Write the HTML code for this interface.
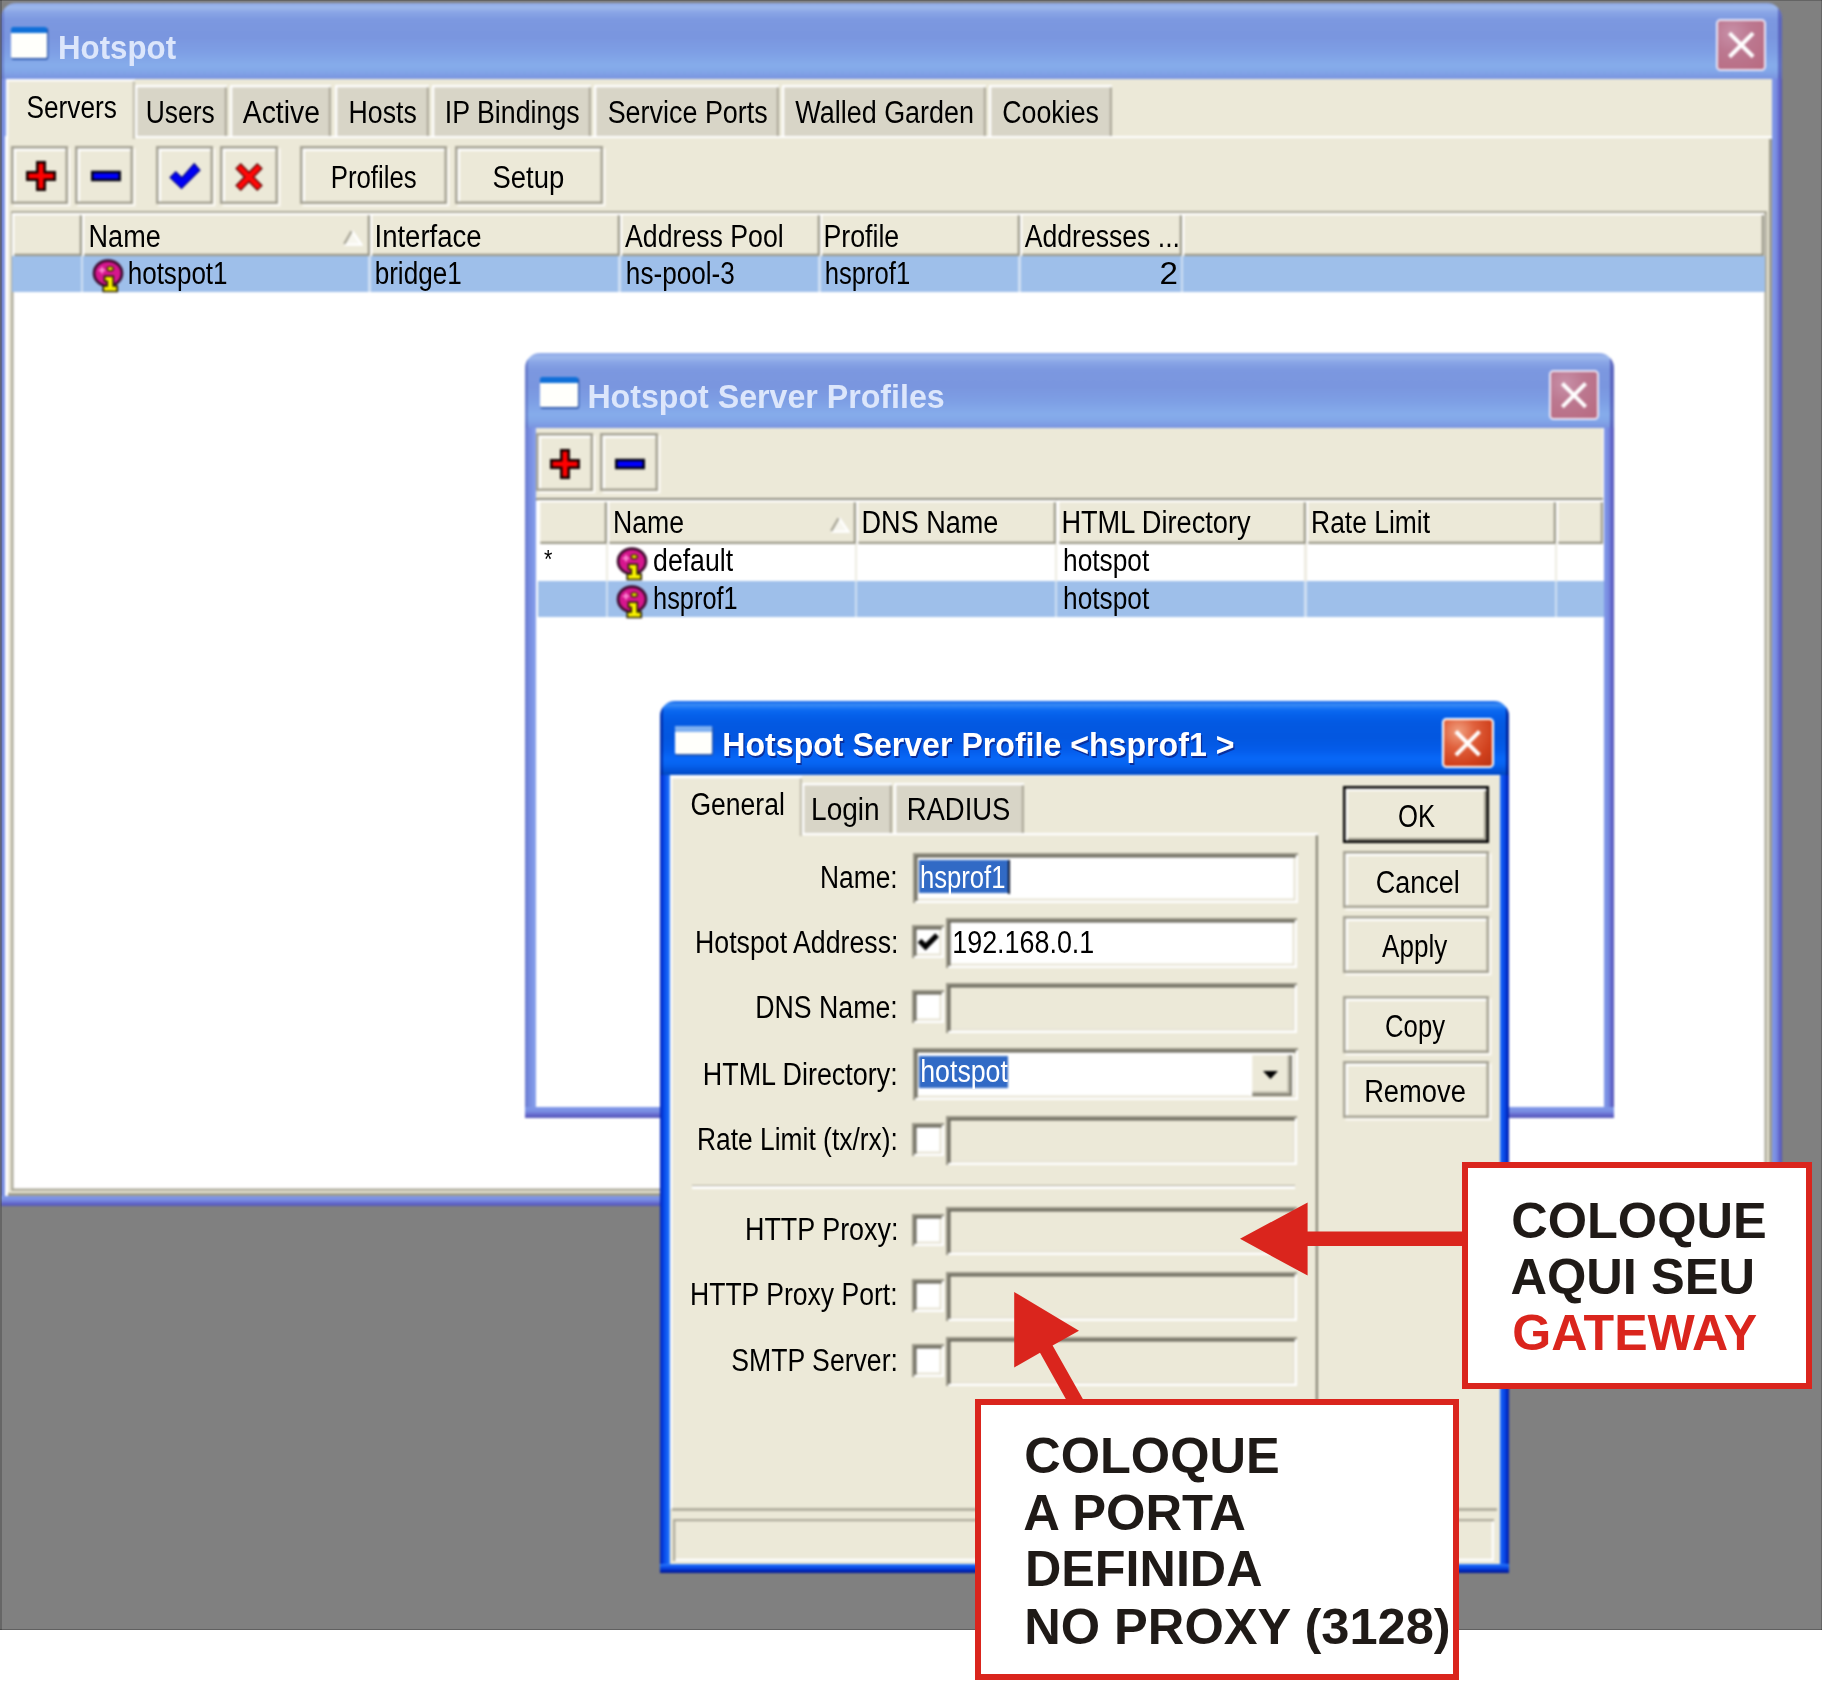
<!DOCTYPE html>
<html><head><meta charset="utf-8"><title>Hotspot</title>
<style>
html,body{margin:0;padding:0}
body{width:1822px;height:1681px;background:#fff;overflow:hidden;position:relative;font-family:"Liberation Sans",sans-serif}
#bg{position:absolute;left:0;top:0;width:1822px;height:1630px;background:#808080;overflow:hidden;box-shadow:inset 0 -1px 0 #606060}
#xp{position:absolute;left:0;top:0;width:1822px;height:1630px;filter:blur(0.8px)}
#xp div,#xp svg{position:absolute}
#tx{position:absolute;left:0;top:0;width:1822px;height:1630px;opacity:.999}
.t{position:absolute;left:0;top:0;white-space:nowrap}
</style></head><body>
<div id="bg"><div id="xp">
<div style="left:1.2px;top:75.7px;width:4.8px;height:1129.9px;background:linear-gradient(to right,#6a7acc 0%,#7488dc 30%,#7e96e6 70%,#8aa2ec 100%);"></div>
<div style="left:1771.7px;top:75.7px;width:9.9px;height:1129.9px;background:linear-gradient(to left,#5254b4 0%,#6468cc 28%,#7a8ee2 60%,#7f98e8 100%);"></div>
<div style="left:1.2px;top:1195.6px;width:1780.4px;height:10px;background:linear-gradient(to top,#5254b4 0%,#6468cc 28%,#7a8ee2 60%,#7f98e8 100%);"></div>
<div style="left:1.2px;top:3.4px;width:1780.4px;height:75.3px;border-radius:15px 15px 0 0;overflow:hidden;background:linear-gradient(to bottom,#8fa9e8 0%,#9db8ec 6%,#8aa6e6 12%,#7c98e0 22%,#7a96df 45%,#7e9fe5 65%,#86aceb 82%,#82a6e8 90%,#7a94e0 100%);"><div style="left:0;top:0;bottom:0;width:3px;background:rgba(80,90,180,.45)"></div><div style="right:0;top:0;bottom:0;width:3.5px;background:rgba(70,70,170,.6)"></div></div>
<div style="left:6px;top:78.7px;width:1765.7px;height:1116.9px;background:#ece9d8;"></div>
<div style="left:10.6px;top:26.5px;width:36.9px;height:31.5px;background:#fffffb;border-radius:1.5px;box-shadow:0.75px 1.25px 0 0.5px #2a55a8;"><div style="left:0;top:0;right:0;height:6.3px;background:#0f6fd8;border-radius:1.5px 1.5px 0 0"></div></div>
<div style="left:1715.6px;top:19.3px;width:50.4px;height:51.7px;box-sizing:border-box;border:2.25px solid #e8e4f4;border-radius:4.5px;background:radial-gradient(circle at 30% 25%,#c890a8 0%,#bc7890 40%,#b86a80 100%);"><svg style="position:absolute;left:0;top:0" width="48.4" height="49.7" viewBox="0 0 21 21"><path d="M5.6 5.6 L14.6 14.6 M14.6 5.6 L5.6 14.6" stroke="#fff" stroke-width="1.75" stroke-linecap="square" fill="none"/></svg></div>
<div style="left:134.8px;top:85.2px;width:92.5px;height:50.4px;background:#d8d5c7;box-shadow:inset 2.25px 2.25px 0 #fff,inset -2.25px 0 0 #aeab9b;"></div>
<div style="left:230.3px;top:85.2px;width:101.1px;height:50.4px;background:#d8d5c7;box-shadow:inset 2.25px 2.25px 0 #fff,inset -2.25px 0 0 #aeab9b;"></div>
<div style="left:334.7px;top:85.2px;width:94.8px;height:50.4px;background:#d8d5c7;box-shadow:inset 2.25px 2.25px 0 #fff,inset -2.25px 0 0 #aeab9b;"></div>
<div style="left:432.3px;top:85.2px;width:159.2px;height:50.4px;background:#d8d5c7;box-shadow:inset 2.25px 2.25px 0 #fff,inset -2.25px 0 0 #aeab9b;"></div>
<div style="left:594.2px;top:85.2px;width:185.1px;height:50.4px;background:#d8d5c7;box-shadow:inset 2.25px 2.25px 0 #fff,inset -2.25px 0 0 #aeab9b;"></div>
<div style="left:781.5px;top:85.2px;width:204.8px;height:50.4px;background:#d8d5c7;box-shadow:inset 2.25px 2.25px 0 #fff,inset -2.25px 0 0 #aeab9b;"></div>
<div style="left:988.5px;top:85.2px;width:123.5px;height:50.4px;background:#d8d5c7;box-shadow:inset 2.25px 2.25px 0 #fff,inset -2.25px 0 0 #aeab9b;"></div>
<div style="left:6px;top:135.6px;width:1765.7px;height:2.8px;background:#fff;"></div>
<div style="left:5.4px;top:136.3px;width:2.8px;height:1059.3px;background:#fff;"></div>
<div style="left:1769.2px;top:139px;width:2.5px;height:1056.6px;background:#a09e8e;"></div>
<div style="left:8.2px;top:1193.4px;width:1763.5px;height:2.4px;background:#a09e8e;"></div>
<div style="left:6px;top:79.2px;width:128.5px;height:59.4px;background:#ece9d8;box-shadow:inset 2.25px 2.25px 0 #fff,inset -2.25px 0 0 #c2bfaf;"></div>
<div style="left:10.6px;top:146.4px;width:57.5px;height:57.2px;background:#ece9d8;box-shadow:inset 0 0 0 2.5px #a6a394,inset 5px 5px 0 #fff,2.5px 2.5px 0 #fbfaf4;"></div>
<svg style="position:absolute;left:40.6px;top:176.3px;overflow:visible" width="2.5" height="2.5" viewBox="0 0 1 1"><path d="M-1.5 -5.5 h3 v4 h4 v3 h-4 v4 h-3 v-4 h-4 v-3 h4 z" fill="#ff0000" stroke="#100000" stroke-width="1"/></svg>
<div style="left:75.3px;top:146.4px;width:57.5px;height:57.2px;background:#ece9d8;box-shadow:inset 0 0 0 2.5px #a6a394,inset 5px 5px 0 #fff,2.5px 2.5px 0 #fbfaf4;"></div>
<svg style="position:absolute;left:105.6px;top:176.3px;overflow:visible" width="2.5" height="2.5" viewBox="0 0 1 1"><rect x="-5.5" y="-1.6" width="11" height="3.2" fill="#0000ff" stroke="#000010" stroke-width="1"/></svg>
<div style="left:155.8px;top:146.4px;width:57.5px;height:57.2px;background:#ece9d8;box-shadow:inset 0 0 0 2.5px #a6a394,inset 5px 5px 0 #fff,2.5px 2.5px 0 #fbfaf4;"></div>
<svg style="position:absolute;left:185.4px;top:176px;overflow:visible" width="2.5" height="2.5" viewBox="0 0 1 1"><path d="M3.69 -4.99 L5.97 -2.35 L-1.4 5.02 L-5.97 0.63 L-3.69 -1.72 L-1.23 0.63 Z" fill="#0000f4" stroke="#00007c" stroke-width="0.45"/></svg>
<div style="left:220.3px;top:146.4px;width:57.5px;height:57.2px;background:#ece9d8;box-shadow:inset 0 0 0 2.5px #a6a394,inset 5px 5px 0 #fff,2.5px 2.5px 0 #fbfaf4;"></div>
<svg style="position:absolute;left:249.3px;top:177.1px;overflow:visible" width="2.5" height="2.5" viewBox="0 0 1 1"><path d="M-4.4 -4.5 L4.4 4.5 M4.4 -4.5 L-4.4 4.5" stroke="#5a0000" stroke-width="3.1" fill="none"/><path d="M-4.1 -4.2 L4.1 4.2 M4.1 -4.2 L-4.1 4.2" stroke="#ff0808" stroke-width="2.1" fill="none"/></svg>
<div style="left:299.8px;top:146.4px;width:147.4px;height:57.2px;background:#ece9d8;box-shadow:inset 0 0 0 2.5px #a6a394,inset 5px 5px 0 #fff,2.5px 2.5px 0 #fbfaf4;"></div>
<div style="left:455.1px;top:146.4px;width:147.5px;height:57.2px;background:#ece9d8;box-shadow:inset 0 0 0 2.5px #a6a394,inset 5px 5px 0 #fff,2.5px 2.5px 0 #fbfaf4;"></div>
<div style="left:10.5px;top:210.8px;width:1756.5px;height:979.8px;background:#fff;box-shadow:inset 0 0 0 2.5px #aeab9b;"></div>
<div style="left:12px;top:213.2px;width:70.3px;height:42.6px;background:#ece9d8;box-shadow:inset 2.25px 2.25px 0 #fff,inset -2.25px -2.25px 0 #9c9a8a;"></div>
<div style="left:82.3px;top:213.2px;width:287.6px;height:42.6px;background:#ece9d8;box-shadow:inset 2.25px 2.25px 0 #fff,inset -2.25px -2.25px 0 #9c9a8a;"></div>
<div style="left:369.9px;top:213.2px;width:250px;height:42.6px;background:#ece9d8;box-shadow:inset 2.25px 2.25px 0 #fff,inset -2.25px -2.25px 0 #9c9a8a;"></div>
<div style="left:619.9px;top:213.2px;width:200px;height:42.6px;background:#ece9d8;box-shadow:inset 2.25px 2.25px 0 #fff,inset -2.25px -2.25px 0 #9c9a8a;"></div>
<div style="left:819.9px;top:213.2px;width:200px;height:42.6px;background:#ece9d8;box-shadow:inset 2.25px 2.25px 0 #fff,inset -2.25px -2.25px 0 #9c9a8a;"></div>
<div style="left:1019.9px;top:213.2px;width:162.5px;height:42.6px;background:#ece9d8;box-shadow:inset 2.25px 2.25px 0 #fff,inset -2.25px -2.25px 0 #9c9a8a;"></div>
<div style="left:1182.4px;top:213.2px;width:582.1px;height:42.6px;background:#ece9d8;box-shadow:inset 2.25px 2.25px 0 #fff,inset -2.25px -2.25px 0 #9c9a8a;"></div>
<svg style="position:absolute;left:342.5px;top:228.6px" width="20" height="17.5" viewBox="0 0 8 7"><path d="M3.4 0.6 L7.6 6.5 L0.4 6.5 Z" fill="#f7f6ee"/><path d="M3.6 0.8 L7.4 6.2 L0.6 6.2" stroke="#fff" stroke-width="0.9" fill="none"/><path d="M0.5 6 L3.4 0.9" stroke="#a5a293" stroke-width="0.9"/></svg>
<div style="left:12px;top:256px;width:1752.5px;height:35.8px;background:#9ebfea;"></div>
<div style="left:80.7px;top:256px;width:2.6px;height:35.8px;background:#cfdff3;"></div>
<div style="left:368.3px;top:256px;width:2.6px;height:35.8px;background:#cfdff3;"></div>
<div style="left:618.3px;top:256px;width:2.6px;height:35.8px;background:#cfdff3;"></div>
<div style="left:818.3px;top:256px;width:2.6px;height:35.8px;background:#cfdff3;"></div>
<div style="left:1018.3px;top:256px;width:2.6px;height:35.8px;background:#cfdff3;"></div>
<div style="left:1180.8px;top:256px;width:2.6px;height:35.8px;background:#cfdff3;"></div>
<svg style="position:absolute;left:88.3px;top:257.15px" width="40" height="40" viewBox="0 0 16 16"><ellipse cx="8" cy="6.5" rx="5.6" ry="5.05" fill="#d6168e" stroke="#3c0a2c" stroke-width="1.05"/><path d="M4.3 5.3 h2.6 M5.6 4 v2.6" stroke="#ff8ad6" stroke-width="0.75"/><ellipse cx="8.9" cy="4.7" rx="1.25" ry="0.85" fill="#f4ee00" stroke="#3a2a00" stroke-width="0.55"/><path d="M6.6 7.7 h3.5 v3.9 h1.6 v2.2 h-5.6 v-2.2 h1.6 v-1.9 h-1.1 z" fill="#f8f200" stroke="#221a00" stroke-width="0.65"/></svg>
<div style="left:525.2px;top:425.3px;width:11.2px;height:692.7px;background:linear-gradient(to right,#6a7acc 0%,#7488dc 30%,#7e96e6 70%,#8aa2ec 100%);"></div>
<div style="left:1603.5px;top:425.3px;width:10.5px;height:692.7px;background:linear-gradient(to left,#5254b4 0%,#6468cc 28%,#7a8ee2 60%,#7f98e8 100%);"></div>
<div style="left:525.2px;top:1107px;width:1088.8px;height:11px;background:linear-gradient(to top,#5254b4 0%,#6468cc 28%,#7a8ee2 60%,#7f98e8 100%);"></div>
<div style="left:525.2px;top:353.4px;width:1088.8px;height:74.9px;border-radius:15px 15px 0 0;overflow:hidden;background:linear-gradient(to bottom,#8fa9e8 0%,#9db8ec 6%,#8aa6e6 12%,#7c98e0 22%,#7a96df 45%,#7e9fe5 65%,#86aceb 82%,#82a6e8 90%,#7a94e0 100%);"><div style="left:0;top:0;bottom:0;width:3px;background:rgba(80,90,180,.45)"></div><div style="right:0;top:0;bottom:0;width:3.5px;background:rgba(70,70,170,.6)"></div></div>
<div style="left:536.4px;top:428.3px;width:1067.1px;height:678.7px;background:#ece9d8;"></div>
<div style="left:539.6px;top:376.8px;width:38.2px;height:30.4px;background:#fffffb;border-radius:1.5px;box-shadow:0.75px 1.25px 0 0.5px #2a55a8;"><div style="left:0;top:0;right:0;height:6.08px;background:#0f6fd8;border-radius:1.5px 1.5px 0 0"></div></div>
<div style="left:1548.8px;top:369.5px;width:49.8px;height:50.1px;box-sizing:border-box;border:2.25px solid #e8e4f4;border-radius:4.5px;background:radial-gradient(circle at 30% 25%,#c890a8 0%,#bc7890 40%,#b86a80 100%);"><svg style="position:absolute;left:0;top:0" width="47.8" height="48.1" viewBox="0 0 21 21"><path d="M5.6 5.6 L14.6 14.6 M14.6 5.6 L5.6 14.6" stroke="#fff" stroke-width="1.75" stroke-linecap="square" fill="none"/></svg></div>
<div style="left:535.8px;top:433.2px;width:57.4px;height:57.5px;background:#ece9d8;box-shadow:inset 0 0 0 2.5px #a6a394,inset 5px 5px 0 #fff,2.5px 2.5px 0 #fbfaf4;"></div>
<svg style="position:absolute;left:565.1px;top:463.7px;overflow:visible" width="2.5" height="2.5" viewBox="0 0 1 1"><path d="M-1.5 -5.5 h3 v4 h4 v3 h-4 v4 h-3 v-4 h-4 v-3 h4 z" fill="#ff0000" stroke="#100000" stroke-width="1"/></svg>
<div style="left:600.3px;top:433.2px;width:57.3px;height:57.5px;background:#ece9d8;box-shadow:inset 0 0 0 2.5px #a6a394,inset 5px 5px 0 #fff,2.5px 2.5px 0 #fbfaf4;"></div>
<svg style="position:absolute;left:630.3px;top:463.6px;overflow:visible" width="2.5" height="2.5" viewBox="0 0 1 1"><rect x="-5.5" y="-1.6" width="11" height="3.2" fill="#0000ff" stroke="#000010" stroke-width="1"/></svg>
<div style="left:536.4px;top:498px;width:1067.1px;height:609px;background:#fff;box-shadow:inset 0 2.25px 0 #8f8d80;"></div>
<div style="left:537.5px;top:500px;width:69.6px;height:43.6px;background:#ece9d8;box-shadow:inset 2.25px 2.25px 0 #fff,inset -2.25px -2.25px 0 #9c9a8a;"></div>
<div style="left:607.1px;top:500px;width:249.2px;height:43.6px;background:#ece9d8;box-shadow:inset 2.25px 2.25px 0 #fff,inset -2.25px -2.25px 0 #9c9a8a;"></div>
<div style="left:856.3px;top:500px;width:200.2px;height:43.6px;background:#ece9d8;box-shadow:inset 2.25px 2.25px 0 #fff,inset -2.25px -2.25px 0 #9c9a8a;"></div>
<div style="left:1056.5px;top:500px;width:249.4px;height:43.6px;background:#ece9d8;box-shadow:inset 2.25px 2.25px 0 #fff,inset -2.25px -2.25px 0 #9c9a8a;"></div>
<div style="left:1305.9px;top:500px;width:250.2px;height:43.6px;background:#ece9d8;box-shadow:inset 2.25px 2.25px 0 #fff,inset -2.25px -2.25px 0 #9c9a8a;"></div>
<div style="left:1556.1px;top:500px;width:47.4px;height:43.6px;background:#ece9d8;box-shadow:inset 2.25px 2.25px 0 #fff,inset -2.25px -2.25px 0 #9c9a8a;"></div>
<svg style="position:absolute;left:830px;top:516px" width="20" height="17.5" viewBox="0 0 8 7"><path d="M3.4 0.6 L7.6 6.5 L0.4 6.5 Z" fill="#f7f6ee"/><path d="M3.6 0.8 L7.4 6.2 L0.6 6.2" stroke="#fff" stroke-width="0.9" fill="none"/><path d="M0.5 6 L3.4 0.9" stroke="#a5a293" stroke-width="0.9"/></svg>
<div style="left:537.5px;top:581.2px;width:1066px;height:35.6px;background:#9ebfea;"></div>
<div style="left:605.5px;top:544px;width:2.6px;height:37.2px;background:#eeece2;"></div>
<div style="left:605.5px;top:581.2px;width:2.6px;height:35.6px;background:#cfdff3;"></div>
<div style="left:854.7px;top:544px;width:2.6px;height:37.2px;background:#eeece2;"></div>
<div style="left:854.7px;top:581.2px;width:2.6px;height:35.6px;background:#cfdff3;"></div>
<div style="left:1054.9px;top:544px;width:2.6px;height:37.2px;background:#eeece2;"></div>
<div style="left:1054.9px;top:581.2px;width:2.6px;height:35.6px;background:#cfdff3;"></div>
<div style="left:1304.3px;top:544px;width:2.6px;height:37.2px;background:#eeece2;"></div>
<div style="left:1304.3px;top:581.2px;width:2.6px;height:35.6px;background:#cfdff3;"></div>
<div style="left:1554.5px;top:544px;width:2.6px;height:37.2px;background:#eeece2;"></div>
<div style="left:1554.5px;top:581.2px;width:2.6px;height:35.6px;background:#cfdff3;"></div>
<svg style="position:absolute;left:612.2px;top:544.95px" width="40" height="40" viewBox="0 0 16 16"><ellipse cx="8" cy="6.5" rx="5.6" ry="5.05" fill="#d6168e" stroke="#3c0a2c" stroke-width="1.05"/><path d="M4.3 5.3 h2.6 M5.6 4 v2.6" stroke="#ff8ad6" stroke-width="0.75"/><ellipse cx="8.9" cy="4.7" rx="1.25" ry="0.85" fill="#f4ee00" stroke="#3a2a00" stroke-width="0.55"/><path d="M6.6 7.7 h3.5 v3.9 h1.6 v2.2 h-5.6 v-2.2 h1.6 v-1.9 h-1.1 z" fill="#f8f200" stroke="#221a00" stroke-width="0.65"/></svg>
<svg style="position:absolute;left:612.2px;top:582.55px" width="40" height="40" viewBox="0 0 16 16"><ellipse cx="8" cy="6.5" rx="5.6" ry="5.05" fill="#d6168e" stroke="#3c0a2c" stroke-width="1.05"/><path d="M4.3 5.3 h2.6 M5.6 4 v2.6" stroke="#ff8ad6" stroke-width="0.75"/><ellipse cx="8.9" cy="4.7" rx="1.25" ry="0.85" fill="#f4ee00" stroke="#3a2a00" stroke-width="0.55"/><path d="M6.6 7.7 h3.5 v3.9 h1.6 v2.2 h-5.6 v-2.2 h1.6 v-1.9 h-1.1 z" fill="#f8f200" stroke="#221a00" stroke-width="0.65"/></svg>
<div style="left:660.2px;top:772.5px;width:9.6px;height:800.5px;background:linear-gradient(to right,#0020b4 0%,#0538d8 22%,#0a52ee 50%,#1a6af8 82%,#3a86fa 100%);"></div>
<div style="left:1500px;top:772.5px;width:9.4px;height:800.5px;background:linear-gradient(to left,#0016a0 0%,#0230cc 25%,#0a4ae8 55%,#155ff4 85%,#2a74f8 100%);"></div>
<div style="left:660.2px;top:1563.5px;width:849.2px;height:9.5px;background:linear-gradient(to top,#00148c 0%,#0026b8 25%,#0a48e4 55%,#1a66f6 85%,#3a86fa 100%);"></div>
<div style="left:660.2px;top:701.4px;width:849.2px;height:74.1px;border-radius:15px 15px 0 0;overflow:hidden;background:linear-gradient(to bottom,#0a5fe8 0%,#3b8cf6 5%,#1f78f4 9%,#0a68f0 13%,#0560ea 20%,#0359e2 30%,#0357e0 50%,#045cea 66%,#0868f8 78%,#0663f0 86%,#0355dc 93%,#0048c0 100%);"><div style="left:0;top:0;bottom:0;width:3px;background:rgba(0,20,140,.55)"></div><div style="right:0;top:0;bottom:0;width:3.5px;background:rgba(0,16,130,.7)"></div></div>
<div style="left:669.8px;top:775.5px;width:830.2px;height:788px;background:#ece9d8;"></div>
<div style="left:674.8px;top:726.4px;width:37.6px;height:27.2px;background:#fffffb;border-radius:1.5px;box-shadow:0.75px 1.25px 0 0.5px #2a55a8;"><div style="left:0;top:0;right:0;height:5.45px;background:#7fb0f0;border-radius:1.5px 1.5px 0 0"></div></div>
<div style="left:1442.4px;top:717.9px;width:51.2px;height:50.5px;box-sizing:border-box;border:2.25px solid #fff;border-radius:4.5px;background:radial-gradient(circle at 30% 25%,#f0a080 0%,#e0603c 35%,#d0401c 70%,#b83414 100%);"><svg style="position:absolute;left:0;top:0" width="49.2" height="48.5" viewBox="0 0 21 21"><path d="M5.6 5.6 L14.6 14.6 M14.6 5.6 L5.6 14.6" stroke="#fff" stroke-width="1.75" stroke-linecap="square" fill="none"/></svg></div>
<div style="left:669.8px;top:833px;width:648.2px;height:676px;box-shadow:inset 2.25px 2.25px 0 #fff,inset -2.25px 0 0 #8a8878;"></div>
<div style="left:801.8px;top:783.4px;width:90.1px;height:49.8px;background:#d8d5c7;box-shadow:inset 2.25px 2.25px 0 #fff,inset -2.25px 0 0 #aeab9b;"></div>
<div style="left:893.6px;top:783.4px;width:130px;height:49.8px;background:#d8d5c7;box-shadow:inset 2.25px 2.25px 0 #fff,inset -2.25px 0 0 #aeab9b;"></div>
<div style="left:669.8px;top:776.4px;width:131.8px;height:59.6px;background:#ece9d8;box-shadow:inset 2.25px 2.25px 0 #fff,inset -2.25px 0 0 #c2bfaf;"></div>
<div style="left:913px;top:853.3px;width:384.5px;height:49.5px;background:#fff;box-shadow:inset 2.25px 2.25px 0 #9a9788,inset -2.25px -2.25px 0 #fff,inset 4.5px 4.5px 0 #6a685c,inset -4.5px -4.5px 0 #e8e5d6;"></div>
<div style="left:919.4px;top:860.4px;width:89.6px;height:33px;background:#316ac5;"></div>
<div style="left:1008px;top:860.4px;width:2px;height:33.4px;background:#101830;"></div>
<div style="left:911.8px;top:925.3px;width:32.6px;height:32.8px;background:#fff;box-shadow:inset 2.25px 2.25px 0 #9a9788,inset -2.25px -2.25px 0 #fff,inset 4.5px 4.5px 0 #6a685c,inset -4.5px -4.5px 0 #e8e5d6;"><svg style="position:absolute;left:0;top:0" width="32.6" height="32.8" viewBox="0 0 13 13"><path d="M3 6.2 L5.4 8.6 L10 4" stroke="#000" stroke-width="2.1" fill="none"/></svg></div>
<div style="left:945.6px;top:918.3px;width:351.9px;height:49.5px;background:#fff;box-shadow:inset 2.25px 2.25px 0 #9a9788,inset -2.25px -2.25px 0 #fff,inset 4.5px 4.5px 0 #6a685c,inset -4.5px -4.5px 0 #e8e5d6;"></div>
<div style="left:911.8px;top:990.3px;width:32.6px;height:32.8px;background:#fff;box-shadow:inset 2.25px 2.25px 0 #9a9788,inset -2.25px -2.25px 0 #fff,inset 4.5px 4.5px 0 #6a685c,inset -4.5px -4.5px 0 #e8e5d6;"></div>
<div style="left:945.6px;top:983.3px;width:351.9px;height:49.5px;background:#ece9d8;box-shadow:inset 2.25px 2.25px 0 #9a9788,inset -2.25px -2.25px 0 #fff,inset 4.5px 4.5px 0 #6a685c,inset -4.5px -4.5px 0 #e8e5d6;"></div>
<div style="left:913px;top:1048.3px;width:384.5px;height:52.1px;background:#fff;box-shadow:inset 2.25px 2.25px 0 #9a9788,inset -2.25px -2.25px 0 #fff,inset 4.5px 4.5px 0 #6a685c,inset -4.5px -4.5px 0 #e8e5d6;"></div>
<div style="left:1250px;top:1052.8px;width:42.4px;height:42.8px;background:#ece9d8;box-shadow:inset 2.25px 2.25px 0 #fff,inset -2.25px -2.25px 0 #7d7b6e,inset -4.5px -4.5px 0 #b8b5a6;"></div>
<svg style="position:absolute;left:1262.5px;top:1070.5px" width="15" height="8" viewBox="0 0 6 3.2"><path d="M0 0 H6 L3 3.2 Z" fill="#000"/></svg>
<div style="left:919.4px;top:1056px;width:88.2px;height:32.4px;background:#316ac5;"></div>
<div style="left:911.8px;top:1122.8px;width:32.6px;height:32.8px;background:#fff;box-shadow:inset 2.25px 2.25px 0 #9a9788,inset -2.25px -2.25px 0 #fff,inset 4.5px 4.5px 0 #6a685c,inset -4.5px -4.5px 0 #e8e5d6;"></div>
<div style="left:945.6px;top:1115.8px;width:351.9px;height:49.2px;background:#ece9d8;box-shadow:inset 2.25px 2.25px 0 #9a9788,inset -2.25px -2.25px 0 #fff,inset 4.5px 4.5px 0 #6a685c,inset -4.5px -4.5px 0 #e8e5d6;"></div>
<div style="left:692px;top:1184.6px;width:603px;height:1.8px;background:#aca899;"></div>
<div style="left:692px;top:1186.4px;width:603px;height:2.2px;background:#fff;"></div>
<div style="left:911.8px;top:1213.6px;width:32.6px;height:32.8px;background:#fff;box-shadow:inset 2.25px 2.25px 0 #9a9788,inset -2.25px -2.25px 0 #fff,inset 4.5px 4.5px 0 #6a685c,inset -4.5px -4.5px 0 #e8e5d6;"></div>
<div style="left:945.6px;top:1206.6px;width:351.9px;height:48.8px;background:#ece9d8;box-shadow:inset 2.25px 2.25px 0 #9a9788,inset -2.25px -2.25px 0 #fff,inset 4.5px 4.5px 0 #6a685c,inset -4.5px -4.5px 0 #e8e5d6;"></div>
<div style="left:911.8px;top:1278.8px;width:32.6px;height:32.8px;background:#fff;box-shadow:inset 2.25px 2.25px 0 #9a9788,inset -2.25px -2.25px 0 #fff,inset 4.5px 4.5px 0 #6a685c,inset -4.5px -4.5px 0 #e8e5d6;"></div>
<div style="left:945.6px;top:1271.8px;width:351.9px;height:48.8px;background:#ece9d8;box-shadow:inset 2.25px 2.25px 0 #9a9788,inset -2.25px -2.25px 0 #fff,inset 4.5px 4.5px 0 #6a685c,inset -4.5px -4.5px 0 #e8e5d6;"></div>
<div style="left:911.8px;top:1344px;width:32.6px;height:32.8px;background:#fff;box-shadow:inset 2.25px 2.25px 0 #9a9788,inset -2.25px -2.25px 0 #fff,inset 4.5px 4.5px 0 #6a685c,inset -4.5px -4.5px 0 #e8e5d6;"></div>
<div style="left:945.6px;top:1337px;width:351.9px;height:48.8px;background:#ece9d8;box-shadow:inset 2.25px 2.25px 0 #9a9788,inset -2.25px -2.25px 0 #fff,inset 4.5px 4.5px 0 #6a685c,inset -4.5px -4.5px 0 #e8e5d6;"></div>
<div style="left:1342.5px;top:786.2px;width:146.8px;height:56.7px;background:#ece9d8;box-shadow:inset 0 0 0 2.5px #000,inset 5px 5px 0 #fff,inset -5px -5px 0 #a29f90;"></div>
<div style="left:1342.5px;top:851.4px;width:146.8px;height:56.7px;background:#ece9d8;box-shadow:inset 0 0 0 2.5px #a6a394,inset 5px 5px 0 #fff,2.5px 2.5px 0 #fbfaf4;"></div>
<div style="left:1342.5px;top:916.2px;width:146.8px;height:56.7px;background:#ece9d8;box-shadow:inset 0 0 0 2.5px #a6a394,inset 5px 5px 0 #fff,2.5px 2.5px 0 #fbfaf4;"></div>
<div style="left:1342.5px;top:996.2px;width:146.8px;height:56.7px;background:#ece9d8;box-shadow:inset 0 0 0 2.5px #a6a394,inset 5px 5px 0 #fff,2.5px 2.5px 0 #fbfaf4;"></div>
<div style="left:1342.5px;top:1061.2px;width:146.8px;height:56.7px;background:#ece9d8;box-shadow:inset 0 0 0 2.5px #a6a394,inset 5px 5px 0 #fff,2.5px 2.5px 0 #fbfaf4;"></div>
<div style="left:672.4px;top:1508.4px;width:824.6px;height:2.2px;background:#b3b0a0;"></div>
<div style="left:673px;top:1518.6px;width:487px;height:42.4px;box-shadow:inset 2.25px 2.25px 0 #aeab9b,inset -2.25px -2.25px 0 #fff;"></div>
<div style="left:1166px;top:1518.6px;width:327.5px;height:42.4px;box-shadow:inset 2.25px 2.25px 0 #aeab9b,inset -2.25px -2.25px 0 #fff;"></div>
</div>
<div id="tx">
<div class="t" style="font-size:33px;line-height:33px;font-weight:bold;color:#dce6fb;transform:translate(58.06px,30.6px) scaleX(0.9466);transform-origin:0 0;">Hotspot</div>
<div class="t" style="font-size:31px;line-height:31px;color:#000;transform:translate(145.66px,96.6px) scaleX(0.8529);transform-origin:0 0;">Users</div>
<div class="t" style="font-size:31px;line-height:31px;color:#000;transform:translate(242.84px,96.6px) scaleX(0.9125);transform-origin:0 0;">Active</div>
<div class="t" style="font-size:31px;line-height:31px;color:#000;transform:translate(348.59px,96.6px) scaleX(0.8608);transform-origin:0 0;">Hosts</div>
<div class="t" style="font-size:31px;line-height:31px;color:#000;transform:translate(444.79px,96.6px) scaleX(0.8632);transform-origin:0 0;">IP Bindings</div>
<div class="t" style="font-size:31px;line-height:31px;color:#000;transform:translate(607.65px,96.6px) scaleX(0.8685);transform-origin:0 0;">Service Ports</div>
<div class="t" style="font-size:31px;line-height:31px;color:#000;transform:translate(795.30px,96.6px) scaleX(0.8690);transform-origin:0 0;">Walled Garden</div>
<div class="t" style="font-size:31px;line-height:31px;color:#000;transform:translate(1002.24px,96.6px) scaleX(0.8634);transform-origin:0 0;">Cookies</div>
<div class="t" style="font-size:31px;line-height:31px;color:#000;transform:translate(26.44px,92.3px) scaleX(0.8463);transform-origin:0 0;">Servers</div>
<div class="t" style="font-size:31px;line-height:31px;color:#000;transform:translate(330.68px,162.2px) scaleX(0.8323);transform-origin:0 0;">Profiles</div>
<div class="t" style="font-size:31px;line-height:31px;color:#000;transform:translate(492.58px,162.2px) scaleX(0.8845);transform-origin:0 0;">Setup</div>
<div class="t" style="font-size:31px;line-height:31px;color:#000;transform:translate(88.59px,220.6px) scaleX(0.8717);transform-origin:0 0;">Name</div>
<div class="t" style="font-size:31px;line-height:31px;color:#000;transform:translate(374.50px,220.6px) scaleX(0.8875);transform-origin:0 0;">Interface</div>
<div class="t" style="font-size:31px;line-height:31px;color:#000;transform:translate(625.09px,220.6px) scaleX(0.8599);transform-origin:0 0;">Address Pool</div>
<div class="t" style="font-size:31px;line-height:31px;color:#000;transform:translate(823.40px,220.6px) scaleX(0.8631);transform-origin:0 0;">Profile</div>
<div class="t" style="font-size:31px;line-height:31px;color:#000;transform:translate(1024.70px,220.6px) scaleX(0.8581);transform-origin:0 0;">Addresses ...</div>
<div class="t" style="font-size:31px;line-height:31px;color:#000;transform:translate(127.67px,257.8px) scaleX(0.8401);transform-origin:0 0;">hotspot1</div>
<div class="t" style="font-size:31px;line-height:31px;color:#000;transform:translate(374.66px,257.8px) scaleX(0.8420);transform-origin:0 0;">bridge1</div>
<div class="t" style="font-size:31px;line-height:31px;color:#000;transform:translate(625.86px,257.8px) scaleX(0.8431);transform-origin:0 0;">hs-pool-3</div>
<div class="t" style="font-size:31px;line-height:31px;color:#000;transform:translate(824.70px,257.8px) scaleX(0.8270);transform-origin:0 0;">hsprof1</div>
<div class="t" style="font-size:31px;line-height:31px;color:#000;transform:translate(1159.50px,257.8px) scaleX(1.0686);transform-origin:0 0;">2</div>
<div class="t" style="font-size:33px;line-height:33px;font-weight:bold;color:#dce6fb;transform:translate(587.38px,379.8px) scaleX(0.9742);transform-origin:0 0;">Hotspot Server Profiles</div>
<div class="t" style="font-size:31px;line-height:31px;color:#000;transform:translate(613.01px,506.8px) scaleX(0.8591);transform-origin:0 0;">Name</div>
<div class="t" style="font-size:31px;line-height:31px;color:#000;transform:translate(861.55px,506.8px) scaleX(0.8731);transform-origin:0 0;">DNS Name</div>
<div class="t" style="font-size:31px;line-height:31px;color:#000;transform:translate(1061.38px,506.8px) scaleX(0.8763);transform-origin:0 0;">HTML Directory</div>
<div class="t" style="font-size:31px;line-height:31px;color:#000;transform:translate(1311.04px,506.8px) scaleX(0.8525);transform-origin:0 0;">Rate Limit</div>
<div class="t" style="font-size:31px;line-height:31px;color:#000;transform:translate(653.07px,545.3px) scaleX(0.8598);transform-origin:0 0;">default</div>
<div class="t" style="font-size:31px;line-height:31px;color:#000;transform:translate(653.11px,583.0px) scaleX(0.8171);transform-origin:0 0;">hsprof1</div>
<div class="t" style="font-size:31px;line-height:31px;color:#000;transform:translate(1063.05px,545.3px) scaleX(0.8474);transform-origin:0 0;">hotspot</div>
<div class="t" style="font-size:31px;line-height:31px;color:#000;transform:translate(1063.05px,583.0px) scaleX(0.8479);transform-origin:0 0;">hotspot</div>
<div class="t" style="font-size:26px;line-height:26px;color:#000;transform:translate(544.0px,546.0px) scaleX(0.827);transform-origin:0 0;">*</div>
<div class="t" style="font-size:33px;line-height:33px;font-weight:bold;color:#0a2f9c;transform:translate(723.57px,729.8px) scaleX(0.9731);transform-origin:0 0;">Hotspot Server Profile &lt;hsprof1 &gt;</div>
<div class="t" style="font-size:33px;line-height:33px;font-weight:bold;color:#fff;transform:translate(722.27px,728.4px) scaleX(0.9731);transform-origin:0 0;">Hotspot Server Profile &lt;hsprof1 &gt;</div>
<div class="t" style="font-size:31px;line-height:31px;color:#000;transform:translate(811.07px,794.4px) scaleX(0.9041);transform-origin:0 0;">Login</div>
<div class="t" style="font-size:31px;line-height:31px;color:#000;transform:translate(906.72px,794.4px) scaleX(0.8849);transform-origin:0 0;">RADIUS</div>
<div class="t" style="font-size:31px;line-height:31px;color:#000;transform:translate(690.43px,789.3px) scaleX(0.8554);transform-origin:0 0;">General</div>
<div class="t" style="font-size:31px;line-height:31px;color:#000;transform:translate(820.03px,862.2px) scaleX(0.8505);transform-origin:0 0;">Name:</div>
<div class="t" style="font-size:31px;line-height:31px;color:#fff;transform:translate(919.90px,862.2px) scaleX(0.8270);transform-origin:0 0;">hsprof1</div>
<div class="t" style="font-size:31px;line-height:31px;color:#000;transform:translate(694.99px,927.0px) scaleX(0.8617);transform-origin:0 0;">Hotspot Address:</div>
<div class="t" style="font-size:31px;line-height:31px;color:#000;transform:translate(952.22px,926.8px) scaleX(0.8676);transform-origin:0 0;">192.168.0.1</div>
<div class="t" style="font-size:31px;line-height:31px;color:#000;transform:translate(755.18px,992.0px) scaleX(0.8616);transform-origin:0 0;">DNS Name:</div>
<div class="t" style="font-size:31px;line-height:31px;color:#000;transform:translate(702.77px,1059.2px) scaleX(0.8682);transform-origin:0 0;">HTML Directory:</div>
<div class="t" style="font-size:31px;line-height:31px;color:#fff;transform:translate(920.23px,1056.0px) scaleX(0.8620);transform-origin:0 0;">hotspot</div>
<div class="t" style="font-size:31px;line-height:31px;color:#000;transform:translate(697.05px,1124.3px) scaleX(0.8508);transform-origin:0 0;">Rate Limit (tx/rx):</div>
<div class="t" style="font-size:31px;line-height:31px;color:#000;transform:translate(744.99px,1214.3px) scaleX(0.8678);transform-origin:0 0;">HTTP Proxy:</div>
<div class="t" style="font-size:31px;line-height:31px;color:#000;transform:translate(690.00px,1279.4px) scaleX(0.8565);transform-origin:0 0;">HTTP Proxy Port:</div>
<div class="t" style="font-size:31px;line-height:31px;color:#000;transform:translate(731.26px,1344.7px) scaleX(0.8587);transform-origin:0 0;">SMTP Server:</div>
<div class="t" style="font-size:31px;line-height:31px;color:#000;transform:translate(1398.06px,801.4px) scaleX(0.8283);transform-origin:0 0;">OK</div>
<div class="t" style="font-size:31px;line-height:31px;color:#000;transform:translate(1375.82px,866.6px) scaleX(0.8702);transform-origin:0 0;">Cancel</div>
<div class="t" style="font-size:31px;line-height:31px;color:#000;transform:translate(1382.09px,931.4px) scaleX(0.8400);transform-origin:0 0;">Apply</div>
<div class="t" style="font-size:31px;line-height:31px;color:#000;transform:translate(1385.10px,1011.4px) scaleX(0.8273);transform-origin:0 0;">Copy</div>
<div class="t" style="font-size:31px;line-height:31px;color:#000;transform:translate(1364.15px,1076.4px) scaleX(0.8809);transform-origin:0 0;">Remove</div>
</div>
<div style="position:absolute;left:0;top:0;width:1.6px;height:1630px;background:rgba(0,0,0,.2)"></div><div style="position:absolute;left:0;top:0;width:1822px;height:1.3px;background:rgba(0,0,0,.22)"></div><div style="position:absolute;right:0;top:0;width:1px;height:1630px;background:rgba(0,0,0,.2)"></div></div>
<div style="position:absolute;left:1462.4px;top:1162.4px;width:350px;height:226.2px;box-sizing:border-box;border:6.6px solid #da251d;background:#fff"></div>
<div style="position:absolute;left:975.4px;top:1399px;width:484px;height:281px;box-sizing:border-box;border:6.6px solid #da251d;background:#fff"></div>
<svg style="position:absolute;left:0;top:0" width="1822" height="1681" viewBox="0 0 1822 1681"><path d="M1240 1238.8 L1307.6 1202.4 L1307.6 1231.6 L1464 1231.6 L1464 1246 L1307.6 1246 L1307.6 1275.6 Z" fill="#da251d"/><path d="M1014.2 1292 L1079 1330.8 L1052.6 1345.6 L1083.4 1400 L1066.4 1400 L1040 1352.8 L1014.2 1367.4 Z" fill="#da251d"/></svg>
<div class="t" style="font-size:50px;line-height:50px;font-weight:bold;color:#1f1a17;transform:translate(1511.18px,1196.1px) scaleX(1.0105);transform-origin:0 0;">COLOQUE</div>
<div class="t" style="font-size:50px;line-height:50px;font-weight:bold;color:#1f1a17;transform:translate(1510.39px,1252.1px) scaleX(1.0118);transform-origin:0 0;">AQUI SEU</div>
<div class="t" style="font-size:50px;line-height:50px;font-weight:bold;color:#da251d;transform:translate(1512.19px,1308.1px) scaleX(1.0017);transform-origin:0 0;">GATEWAY</div>
<div class="t" style="font-size:50px;line-height:50px;font-weight:bold;color:#1f1a17;transform:translate(1024.18px,1431.4px) scaleX(1.0105);transform-origin:0 0;">COLOQUE</div>
<div class="t" style="font-size:50px;line-height:50px;font-weight:bold;color:#1f1a17;transform:translate(1023.29px,1488.0px) scaleX(1.0148);transform-origin:0 0;">A PORTA</div>
<div class="t" style="font-size:50px;line-height:50px;font-weight:bold;color:#1f1a17;transform:translate(1024.98px,1544.2px) scaleX(1.0061);transform-origin:0 0;">DEFINIDA</div>
<div class="t" style="font-size:50px;line-height:50px;font-weight:bold;color:#1f1a17;transform:translate(1024.15px,1601.6px) scaleX(1.0121);transform-origin:0 0;">NO PROXY (3128)</div>
</body></html>
